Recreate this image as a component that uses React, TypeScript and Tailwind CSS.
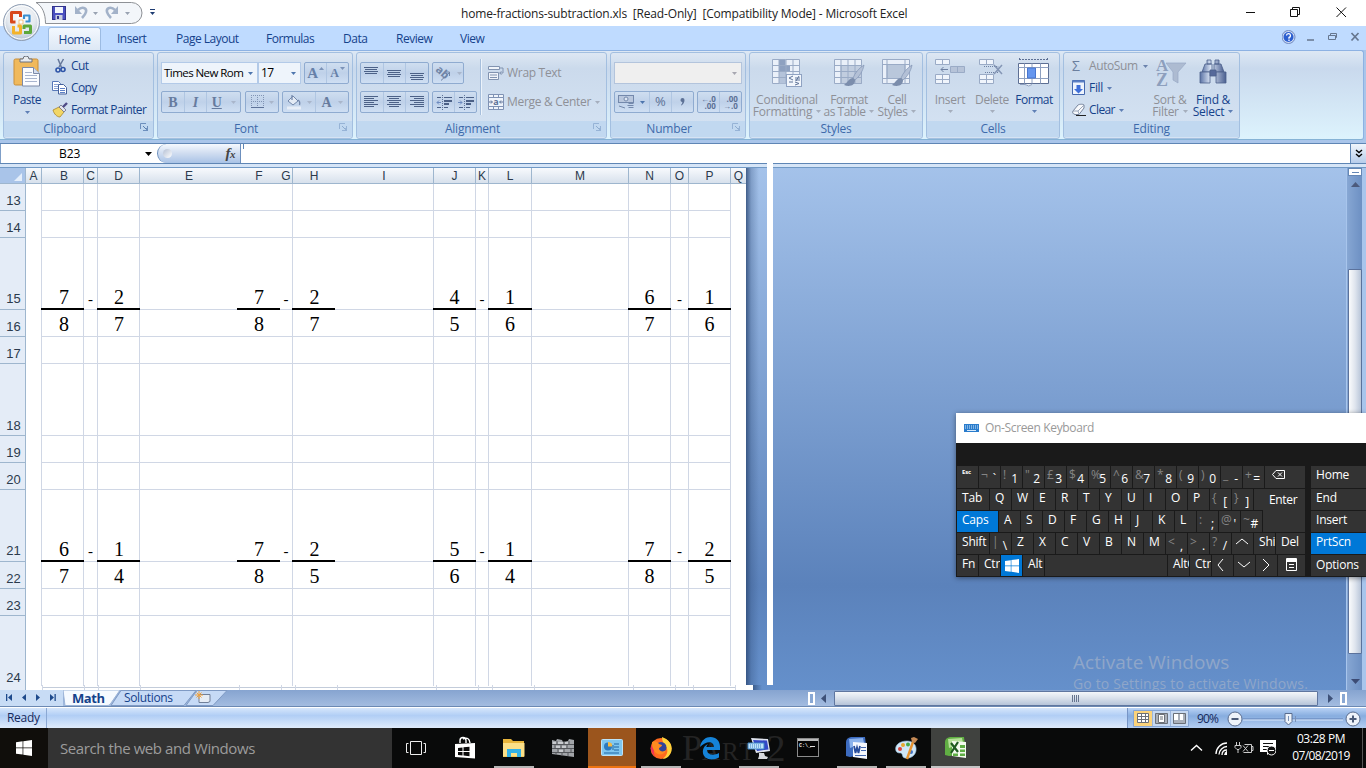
import React from "react";

type Kids = { children?: React.ReactNode; className?: string };

const UI = "font-['Open_Sans','Noto_Sans',sans-serif]";

/* ---------- small helpers ---------- */

function Arrow({ className = "text-[#7a8fb4]" }: { className?: string }) {
  return (
    <svg width="5" height="3" viewBox="0 0 5 3" className={`shrink-0 ${className}`}>
      <path d="M0 0h5L2.5 3z" fill="currentColor" />
    </svg>
  );
}

function Launcher({ dim = false }: { dim?: boolean }) {
  return (
    <svg width="9" height="9" viewBox="0 0 9 9" className={dim ? "opacity-50" : ""}>
      <path d="M.5 6V.5H6" fill="none" stroke="#6d8fbd" />
      <path d="M3 3l3 3" stroke="#5b7fae" />
      <path d="M8 3v5H3V7h3V5h1V3z" fill="#6d8fbd" />
    </svg>
  );
}

function Group({ title, width, launcher, children }: { title: string; width: string; launcher?: "on" | "dim"; children?: React.ReactNode }) {
  return (
    <section className={`flex shrink-0 flex-col overflow-hidden rounded-[3px] border border-[#a3bfe0] bg-gradient-to-b from-[#dde7f3] via-[#cbdaec] via-[18%] to-[#d5e3f3] ${width}`}>
      <div className="flex h-[68px]">{children}</div>
      <div className={`relative flex h-[16px] items-center justify-center bg-[#c1d8f0] text-[12px] tracking-[-0.2px] text-[#3e6aaa] ${launcher ? "pr-[18px]" : ""}`}>
        {title}
        {launcher && (
          <span className="absolute right-[4px] top-[2px]">
            <Launcher dim={launcher === "dim"} />
          </span>
        )}
      </div>
    </section>
  );
}

function Box({ className = "", children }: Kids) {
  return (
    <div className={`flex h-[22px] shrink-0 items-stretch divide-x divide-[#b0c6e2] rounded-[2px] border border-[#8fabd0] bg-gradient-to-b from-[#cfdef0] via-[#bfd1e9] to-[#cfdff3] ${className}`}>
      {children}
    </div>
  );
}

function Cell({ className = "", children }: Kids) {
  return <div className={`flex flex-1 items-center justify-center gap-[5px] ${className}`}>{children}</div>;
}

function Lines({ rows, top }: { rows: [number, number][]; top: number }) {
  return (
    <svg width="15" height="14" viewBox="0 0 15 14">
      {rows.map(([x, w], i) => (
        <rect key={i} x={x} y={top + i * 2} width={w} height="1" fill="#4c6187" />
      ))}
    </svg>
  );
}

/* ---------- title bar ---------- */

function OfficeButton() {
  return (
    <svg width="40" height="40" viewBox="0 0 40 40" className="absolute left-[2px] top-[2px]">
      <defs>
        <radialGradient id="orb" cx="50%" cy="35%" r="65%">
          <stop offset="0" stopColor="#fff" />
          <stop offset=".6" stopColor="#e4e9ef" />
          <stop offset="1" stopColor="#b4c2d3" />
        </radialGradient>
      </defs>
      <circle cx="19.5" cy="20.5" r="18" fill="url(#orb)" stroke="#8d9cb2" />
      <circle cx="19.5" cy="20.5" r="16.6" fill="none" stroke="#fff" />
      <g fill="none" strokeWidth="3" strokeLinejoin="round">
        <path d="M13.500 20H9.500v-9.500h9V15" stroke="#d8481c" />
        <path d="M22 17v-3.500h5.500v6h-4" stroke="#3b8fd0" strokeWidth="2.200" />
        <path d="M11.500 24v7h7v-7h-3" stroke="#f4b32a" />
        <path d="M22 27v-3h6.500v6.500H22" stroke="#5da83a" />
      </g>
      <rect x="17" y="18" width="4" height="4" fill="#fff" stroke="#e9a13b" strokeWidth=".6" />
    </svg>
  );
}

function TitleBar() {
  return (
    <header className="relative flex h-[26px] bg-white">
      <svg width="110" height="24" viewBox="0 0 110 24" className="ml-[34px] mt-[1px]">
        <path d="M2 1.500H97.500a10.500 10.500 0 0 1 0 21H11.500C11.500 12 8 5 2 1.500z" fill="#f3f6fa" stroke="#8e9196" />
        <g transform="translate(18 5)">
          <rect x=".5" y=".5" width="13" height="13" fill="#4a4fc0" stroke="#33348c" />
          <rect x="3" y="1" width="8" height="6" fill="#f2f5fc" />
          <rect x="3.500" y="9" width="7" height="5" fill="#c9cede" />
          <rect x="5" y="10" width="2" height="3" fill="#33348c" />
        </g>
        <g fill="none" stroke="#a3b2c9" strokeWidth="2.600">
          <path d="M44 9c4-4 9-2 8 2-.5 2-2 4-4 6" />
          <path d="M81 9c-4-4-9-2-8 2 .5 2 2 4 4 6" />
        </g>
        <path d="M41 5v8h7z" fill="#a3b2c9" />
        <path d="M84 5v8h-7z" fill="#a3b2c9" />
        <path d="M59 11h5l-2.500 3zM91 11h5l-2.500 3z" fill="#9aa3b2" />
      </svg>
      <svg width="7" height="8" viewBox="0 0 7 8" className="ml-[5px] mt-[9px]">
        <path d="M1 .5h5" stroke="#1e3c72" />
        <path d="M1 3h5L3.500 6z" fill="#1e3c72" />
      </svg>
      <div className="absolute left-[461px] top-[5px] whitespace-pre text-[12px] leading-[17px] tracking-[-0.175px] text-[#222]">
        {"home-fractions-subtraction.xls  [Read-Only]  [Compatibility Mode] - Microsoft Excel"}
      </div>
      <svg width="120" height="26" viewBox="0 0 120 26" className="ml-auto" fill="none" stroke="#111">
        <path d="M-1 12.500h10" />
        <path d="M44.500 9.500h7v7h-7zM46.500 9.500v-2h7v7h-2" />
        <path d="M90.500 7.500l9.500 9.500M100 7.500L90.500 17" />
      </svg>
    </header>
  );
}

function TabStrip() {
  const tabs: [string, string][] = [
    ["Insert", "w-[59px]"],
    ["Page Layout", "w-[90px]"],
    ["Formulas", "w-[77px]"],
    ["Data", "w-[53px]"],
    ["Review", "w-[64px]"],
    ["View", "w-[40px]"],
  ];
  return (
    <nav className="flex h-[24px] items-start bg-[#bfdbff] text-[12px] leading-[26px] tracking-[-0.5px] text-[#15428b]">
      <div className="ml-[48px] mr-[16px] mt-[1px] h-[23px] w-[53px] rounded-t-[3px] border border-b-0 border-[#9cbbe2] bg-gradient-to-b from-[#f3f8fe] to-[#dde8f5] text-center leading-[24px]">Home</div>
      {tabs.map(([t, w]) => (
        <div key={t} className={`shrink-0 whitespace-nowrap ${w}`}>
          {t}
        </div>
      ))}
      <svg width="84" height="22" viewBox="0 0 84 22" className="ml-auto">
        <circle cx="6.500" cy="11" r="6.500" fill="#cfdcf3" stroke="#7088c0" />
        <circle cx="6.500" cy="11" r="5" fill="#2c5fd0" />
        <path d="M4.500 9.500a2 2 0 1 1 2.500 2v1.200M7 13.500v1.500" fill="none" stroke="#fff" strokeWidth="1.300" />
        <path d="M25 14h7" stroke="#66768e" strokeWidth="1.500" />
        <path d="M46.500 9.500h7v4h-7zM48.500 9V7.500h6v4h-1" fill="none" stroke="#66768e" />
        <path d="M69.500 7l7 7.500M76.500 7l-7 7.500" stroke="#66768e" strokeWidth="1.700" />
      </svg>
    </nav>
  );
}

/* ---------- ribbon ---------- */

function PasteIcon() {
  return (
    <svg width="28" height="32" viewBox="0 0 28 32">
      <rect x="1" y="3" width="24" height="26" rx="1.500" fill="#f0b95c" stroke="#c98f3a" />
      <path d="M7 6V3h3a3 3 0 0 1 6 0h3v3z" fill="#e8ebef" stroke="#6a717c" />
      <path d="M9.500 11.500h11l6 6V30h-17z" fill="#fbfcff" stroke="#7c8aa8" />
      <path d="M20.500 11.500v6h6" fill="#d5def0" stroke="#7c8aa8" />
      <path d="M12 16.500h7M12 19.500h12M12 22.500h12M12 25.500h12" stroke="#a9b5cf" />
    </svg>
  );
}

function Clipboard() {
  return (
    <Group title="Clipboard" width="w-[151px]" launcher="on">
      <div className="ml-[9px] flex w-[28px] flex-col items-center pt-[3px] text-[12px] leading-[16px] tracking-[-0.5px] text-[#15428b]">
        <PasteIcon />
        <span className="mt-[4px]">Paste</span>
        <Arrow className="mt-[3px] text-[#5f7fb5]" />
      </div>
      <div className="ml-[11px] flex flex-col pt-[2px] text-[12px] leading-[22px] tracking-[-0.6px] text-[#15428b]">
        <div className="flex items-center gap-[3px]">
          <svg width="16" height="16" viewBox="0 0 16 16">
            <path d="M6 1l3.500 8.500M11.500 1L7 9" stroke="#66789a" strokeWidth="1.500" />
            <circle cx="6" cy="12" r="2" fill="none" stroke="#2f55a8" strokeWidth="1.600" />
            <circle cx="11" cy="11.500" r="2" fill="none" stroke="#2f55a8" strokeWidth="1.600" />
          </svg>
          Cut
        </div>
        <div className="flex items-center gap-[3px]">
          <svg width="16" height="16" viewBox="0 0 16 16">
            <path d="M.5 1.500h6l2 2v7h-8z" fill="#fff" stroke="#5878b8" />
            <path d="M2 4.500h4M2 6.500h4M2 8.500h4" stroke="#8fa6d4" />
            <path d="M6.500 4.500h5l3 3v6.500h-8z" fill="#fff" stroke="#44619c" />
            <path d="M8 8.500h5M8 10.500h5M8 12.500h5" stroke="#5c80c6" />
          </svg>
          Copy
        </div>
        <div className="flex items-center gap-[3px] whitespace-nowrap">
          <svg width="16" height="16" viewBox="0 0 16 16">
            <path d="M1 8l6-3 5 5-4 5c-3 0-6-3-7-7z" fill="#f2d665" stroke="#a9872b" strokeWidth=".8" />
            <path d="M7 5l2-2 5 5-2 2z" fill="#e3e3ea" stroke="#6b6f86" strokeWidth=".8" />
            <path d="M11 5l4-4" stroke="#4e4a86" strokeWidth="2.400" />
          </svg>
          Format Painter
        </div>
      </div>
    </Group>
  );
}

function FontGroup() {
  return (
    <Group title="Font" width="w-[196px]" launcher="dim">
      <div className="ml-[3px] flex flex-col">
        <div className="mt-[9px] flex text-[12px] tracking-[-0.2px] text-black">
          <div className="flex h-[22px] w-[97px] items-center justify-between border border-[#b3cae8] bg-[#eef4fb] pl-[2px] pr-[4px]">
            <span className="whitespace-nowrap text-[11.5px] tracking-[-0.55px]">Times New Rom</span>
            <Arrow className="text-[#4d75ad]" />
          </div>
          <div className="flex h-[22px] w-[43px] items-center justify-between border border-[#b3cae8] bg-[#eef4fb] pl-[2px] pr-[4px] tracking-[-0.7px]">
            17
            <Arrow className="text-[#4d75ad]" />
          </div>
          <Box className="ml-[3px] w-[45px] font-['Liberation_Serif',serif] font-bold text-[#6680a8]">
            <Cell className="gap-px text-[15px]">
              A<svg width="5" height="12" viewBox="0 0 5 12"><path d="M0 3h5L2.500 0z" fill="#7c93b8" /></svg>
            </Cell>
            <Cell className="gap-px text-[12px]">
              A<svg width="5" height="12" viewBox="0 0 5 12"><path d="M0 0h5L2.500 3z" fill="#7c93b8" /></svg>
            </Cell>
          </Box>
        </div>
        <div className="mt-[7px] flex font-['Liberation_Serif',serif] text-[14px] font-bold text-[#667b9e]">
          <Box className="w-[80px]">
            <Cell>B</Cell>
            <Cell className="italic">I</Cell>
            <Cell className="flex-[1.5] gap-[9px]">
              <span className="underline">U</span>
              <Arrow className="text-[#a9b6cb]" />
            </Cell>
          </Box>
          <Box className="ml-[4px] w-[34px]">
            <Cell>
              <svg width="13" height="14" viewBox="0 0 13 14" fill="none" stroke="#8194b4">
                <path d="M.5 0v12M6.500 0v12M12.500 0v12M0 .5h13M0 6.500h13" strokeDasharray="1 1" />
                <path d="M0 12.500h13" stroke="#5d7299" />
              </svg>
              <Arrow className="text-[#a9b6cb]" />
            </Cell>
          </Box>
          <Box className="ml-[3px] w-[67px]">
            <Cell>
              <svg width="16" height="16" viewBox="0 0 16 16">
                <path d="M2 7l5-5 5 5-5 4z" fill="#e4ebf5" stroke="#7388ab" />
                <path d="M6 1v5M12 6c2 1 2 3 1.500 5" stroke="#7388ab" fill="none" strokeWidth="1.300" />
                <rect x="1" y="12.500" width="14" height="3" fill="#e7eef8" />
              </svg>
              <Arrow className="text-[#a9b6cb]" />
            </Cell>
            <Cell className="gap-[6px]">
              A<Arrow className="text-[#a9b6cb]" />
            </Cell>
          </Box>
        </div>
      </div>
    </Group>
  );
}

function Alignment() {
  return (
    <Group title="Alignment" width="w-[251px]" launcher="dim">
      <div className="ml-[3px] flex w-[117px] flex-col">
        <div className="mt-[9px] flex gap-[3px]">
          <Box className="w-[69px]">
            <Cell><Lines top={1} rows={[[0, 14], [1, 12], [0, 14], [1, 12]]} /></Cell>
            <Cell><Lines top={4} rows={[[0, 14], [1, 12], [0, 14], [1, 12]]} /></Cell>
            <Cell><Lines top={7} rows={[[0, 14], [1, 12], [0, 14], [1, 12]]} /></Cell>
          </Box>
          <Box className="w-[32px]">
            <Cell className="gap-[2px] text-[11px] text-[#667b9e]">
              <svg width="17" height="17" viewBox="0 0 17 17">
                <text x="1" y="9" transform="rotate(42 5 6)" fontSize="11" fontFamily="Open Sans" fontWeight="bold" fill="#7084a6">ab</text>
                <path d="M6 15.500l8.500-8M14.500 7h-4M14.500 7v4" stroke="#7084a6" fill="none" />
              </svg>
              <Arrow className="text-[#a9b6cb]" />
            </Cell>
          </Box>
        </div>
        <div className="mt-[7px] flex gap-[3px]">
          <Box className="w-[69px]">
            <Cell><Lines top={1} rows={[[0, 14], [0, 10], [0, 14], [0, 10], [0, 14], [0, 10]]} /></Cell>
            <Cell><Lines top={1} rows={[[0, 14], [2, 10], [0, 14], [2, 10], [0, 14], [2, 10]]} /></Cell>
            <Cell><Lines top={1} rows={[[0, 14], [4, 10], [0, 14], [4, 10], [0, 14], [4, 10]]} /></Cell>
          </Box>
          <Box className="w-[45px]">
            {[0, 1].map((i) => (
              <Cell key={i}>
                <svg width="16" height="15" viewBox="0 0 16 15">
                  <path d="M6.500 0v15" stroke="#5f7499" strokeDasharray="1 1" />
                  <path d="M1 2.500h4M8 2.500h8M1 12.500h4M8 12.500h4" stroke="#4c6187" />
                  <path d="M8 6h8M8 9h5" stroke="#4c6187" strokeWidth="2" />
                  <path d={i === 0 ? "M5 7.500H1M3 5.500l-2 2 2 2" : "M0 7.500h4M2 5.500l2 2-2 2"} stroke="#6d8bc0" fill="none" />
                </svg>
              </Cell>
            ))}
          </Box>
        </div>
      </div>
      <div className="ml-[3px] mt-[6px] h-[56px] w-[2px] border-l border-[#a7bfdc] bg-[#ecf3fb]" />
      <div className="ml-[6px] flex flex-col text-[12px] tracking-[-0.3px] text-[#8e9097]">
        <div className="mt-[9px] flex h-[22px] items-center gap-[3px]">
          <svg width="16" height="16" viewBox="0 0 16 16" stroke="#8193b0">
            <path d="M.5 1.500h11v3H.5zM.5 7.500h10v7H.5z" fill="#f0f4fa" />
            <path d="M2 10h7M2 12.500h7M12 3h3v5h-3M13.500 6.500l-2 1.500 2 1.500" fill="none" />
          </svg>
          Wrap Text
        </div>
        <div className="mt-[7px] flex h-[22px] items-center gap-[3px] whitespace-nowrap">
          <svg width="16" height="16" viewBox="0 0 16 16" stroke="#7f92b4">
            <path d="M.5.500h15v3H.5zM.5 12.500h15v3H.5zM.5 3.500h15v9H.5z" fill="#eff4fb" />
            <path d="M5.500 .5v3M10.500 .5v3M5.500 12.500v3M10.500 12.500v3" />
            <path d="M1 8h3M15 8h-3M3 6.500L4.500 8 3 9.500M13 6.500L11.500 8 13 9.500" fill="none" stroke="#5c7196" />
            <text x="5.200" y="11" fontSize="9" fontWeight="bold" fontFamily="Open Sans" fill="#5c7196" stroke="none">a</text>
          </svg>
          Merge &amp; Center
          <Arrow className="ml-px text-[#a5aebd]" />
        </div>
      </div>
    </Group>
  );
}

function NumberGroup() {
  return (
    <Group title="Number" width="w-[136px]" launcher="dim">
      <div className="ml-[3px] flex flex-col">
        <div className="mt-[9px] flex h-[22px] w-[128px] items-center justify-end border border-[#b3c4dc] bg-[#efefef] pr-[4px]">
          <Arrow className="text-[#a7a7b0]" />
        </div>
        <div className="mt-[7px] flex gap-[3px] text-[#5c7196]">
          <Box className="w-[80px]">
            <Cell className="flex-[1.6]">
              <svg width="17" height="16" viewBox="0 0 17 16" stroke="#7489ac">
                <rect x=".5" y="1.500" width="15" height="7" fill="#b9c7dd" />
                <circle cx="8" cy="5" r="2" fill="#dfe7f2" />
                <path d="M10.500 9.500h5M9.500 11.500h6M10.500 13.500h5M1 12l6 2" fill="none" />
              </svg>
              <Arrow className="text-[#4d75ad]" />
            </Cell>
            <Cell className="text-[13px]">%</Cell>
            <Cell>
              <svg width="5" height="8" viewBox="0 0 5 8"><path d="M.5 2a2 2 0 1 1 4 0c0 2-1 4-3 5.500L1 7c1-1 1.300-2 1.300-3C1.300 4 .5 3 .5 2z" fill="#5c7196" /></svg>
            </Cell>
          </Box>
          <Box className="w-[45px] text-[8px] font-bold leading-[7px]">
            <Cell><span className="whitespace-pre text-right">{"←.0\n.00"}</span></Cell>
            <Cell><span className="whitespace-pre text-right">{".00\n→.0"}</span></Cell>
          </Box>
        </div>
      </div>
    </Group>
  );
}

function TableGlyph({ kind }: { kind: "cond" | "table" | "cell" }) {
  return (
    <svg width="32" height="30" viewBox="0 0 32 30">
      <g stroke="#9aabc6" fill="#eaf0f9">
        <path d="M1.500 1.500h27v24h-27z" />
        {kind === "table" && <path d="M8 7.500h20.500v18H8z" fill="#c1cddf" />}
        {kind === "cell" && <path d="M6 6.500h18v14H6z" fill="#b9c7db" />}
        {kind === "cond" && (
          <>
            <path d="M8 1.500h7v24H8z" fill="#b4c3da" stroke="none" />
            <path d="M8 1.500h6v6H8zM8 7.500h11v6H8z" fill="#8ea1c0" stroke="none" />
          </>
        )}
        {kind === "cell" ? (
          <path d="M6 1.500v24M24 1.500v24M1.500 6.500h27M1.500 20.500h27" fill="none" />
        ) : (
          <path d="M8 1.500v24M15 1.500v24M22 1.500v24M1.500 7.500h27M1.500 13.500h27M1.500 19.500h27" fill="none" />
        )}
      </g>
      {kind === "cond" ? (
        <g>
          <rect x="15.500" y="16.500" width="15" height="12" fill="#f2f6fc" stroke="#8fa2c2" />
          <path d="M22 18l-4 2 4 2M18 24h4M24 20h5M24 22h5M28 18l-3 5M24 24l4 1.500-4 1.500" fill="none" stroke="#5f7499" />
        </g>
      ) : (
        <g>
          <path d="M31 7c-5 3-9 8-11 13l2 2c4-3 8-9 9-15z" fill="#b3c0d6" stroke="#8194b4" strokeWidth=".7" />
          <path d="M20 20c-4 0-5 4-9 7 5 2 11 1 11-5z" fill="#7b8dac" />
        </g>
      )}
    </svg>
  );
}

function Big({ icon, lines, dim = true, className = "", arrowInline = false }: { icon: React.ReactNode; lines: string[]; dim?: boolean; className?: string; arrowInline?: boolean }) {
  const arrow = dim ? "text-[#a5aebd]" : "text-[#5f7fb5]";
  return (
    <div className={`flex shrink-0 flex-col items-center whitespace-nowrap pt-[5px] text-[12px] leading-[13px] ${dim ? "text-[#8e9097]" : "text-[#15428b]"} ${className}`}>
      <div className="flex h-[35px]">{icon}</div>
      <span>{lines[0]}</span>
      {arrowInline ? (
        <span className="-mt-px flex items-center gap-[4px]">
          {lines[1]}
          <Arrow className={arrow} />
        </span>
      ) : (
        <Arrow className={`mt-[4px] ${arrow}`} />
      )}
    </div>
  );
}

function Styles() {
  return (
    <Group title="Styles" width="w-[174px]">
      <Big className="ml-[4px] w-[66px] tracking-[-0.2px]" icon={<TableGlyph kind="cond" />} lines={["Conditional", "Formatting"]} arrowInline />
      <Big className="ml-[4px] w-[50px] tracking-[-0.5px]" icon={<TableGlyph kind="table" />} lines={["Format", "as Table"]} arrowInline />
      <Big className="ml-[4px] w-[38px] tracking-[-0.4px]" icon={<TableGlyph kind="cell" />} lines={["Cell", "Styles"]} arrowInline />
    </Group>
  );
}

function CellsGroup() {
  return (
    <Group title="Cells" width="w-[134px]">
      <Big
        className="ml-[7px] w-[32px] tracking-[-0.3px]"
        lines={["Insert"]}
        icon={
          <svg width="32" height="30" viewBox="0 0 32 30" stroke="#9aabc6" fill="#f0f5fc">
            <path d="M1.500 1.500h14v5h-14zM8.500 1.500v5M1.500 16.500h14v9h-14zM8.500 16.500v9M1.500 21.500h14" />
            <path d="M16.500 8.500h14v6h-14zM23.500 8.500v6" fill="#b6c3d8" />
            <path d="M14 11.500H7M9.500 9L7 11.500 9.500 14" stroke="#6d80a2" fill="none" />
          </svg>
        }
      />
      <Big
        className="ml-[9px] w-[34px] tracking-[-0.4px]"
        lines={["Delete"]}
        icon={
          <svg width="30" height="30" viewBox="0 0 30 30" stroke="#9aabc6" fill="#f0f5fc">
            <path d="M2.500 1.500h14v5h-14zM9.500 1.500v5M2.500 16.500h14v9h-14zM9.500 16.500v9M2.500 21.500h14" />
            <path d="M7 8.500h14v6H7" fill="none" strokeDasharray="1 1" stroke="#6d80a2" />
            <path d="M17 7l8 9M25 7l-8 9" stroke="#8496b5" strokeWidth="1.500" />
          </svg>
        }
      />
      <Big
        className="ml-[7px] w-[36px] tracking-[-0.5px]"
        dim={false}
        lines={["Format"]}
        icon={
          <svg width="32" height="30" viewBox="0 0 32 30" stroke="#5d6f93">
            <path d="M1 1.500h29M1.500 0v3M29.500 0v3" strokeDasharray="2 1" />
            <path d="M.5 5.500h30v20H.5z" fill="#fff" />
            <path d="M.5 9.500h30M.5 20.500h30M6.500 5.500v20M22.500 5.500v20M14 5.500v4M14 20.500v5" stroke="#8ea0c0" fill="none" />
            <path d="M9.500 10h8v10h-8z" fill="#6596ee" stroke="#4876cf" />
            <path d="M2 26.500h5q4 3 7 0" stroke="#8ea0c0" fill="#fff" />
          </svg>
        }
      />
    </Group>
  );
}

function Editing() {
  return (
    <Group title="Editing" width="w-[177px]">
      <div className="ml-[8px] flex w-[76px] flex-col pt-[2px] text-[12px] leading-[22px] tracking-[-0.05px] text-[#15428b]">
        <div className="flex items-center">
          <span className="w-[17px] text-[14px] text-[#6b7f9f]">Σ</span>
          <span className="tracking-[-0.4px] text-[#8e9097]">AutoSum</span>
          <Arrow className="ml-[5px] text-[#6a82ac]" />
        </div>
        <div className="flex items-center tracking-[-0.3px]">
          <svg width="13" height="16" viewBox="0 0 13 16" className="mr-[4px]">
            <path d="M.5.500h12v14H.5z" fill="#eef4fd" stroke="#4468ae" />
            <path d="M.5.500h12v2H.5z" fill="#5a7fc4" />
            <path d="M4.500 5h4v4H11l-4.500 4.500L2 9h2.500z" fill="#3f6fd8" />
          </svg>
          Fill
          <Arrow className="ml-[4px] text-[#5f7fb5]" />
        </div>
        <div className="flex items-center tracking-[-0.6px]">
          <svg width="14" height="14" viewBox="0 0 14 14" className="mr-[3px]">
            <path d="M1 8l5-6c1-1 6-1 6 0v3l-5 6.500H3C1 11 0 9.500 1 8z" fill="#f7f9fc" stroke="#76839b" />
            <path d="M1 8h5l6-6M6 8l1 3" fill="none" stroke="#9aa6ba" />
            <path d="M4 12.500h10" stroke="#222" />
          </svg>
          Clear
          <Arrow className="ml-[4px] text-[#5f7fb5]" />
        </div>
      </div>
      <Big
        className="ml-[5px] w-[34px] tracking-[-0.3px]"
        lines={["Sort &", "Filter"]}
        arrowInline
        icon={
          <svg width="32" height="32" viewBox="0 0 32 32" className="ml-[2px]">
            <path d="M11 5h20l-8 9v11l-5-3v-8z" fill="#adbbd1" stroke="#98a9c5" strokeWidth=".7" />
            <text x="1" y="13" fontSize="17" fontFamily="Liberation Serif" fontWeight="bold" fill="#8d9fbd">A</text>
            <text x="1" y="28" fontSize="18" fontFamily="Liberation Serif" fontWeight="bold" fill="#8d9fbd">Z</text>
          </svg>
        }
      />
      <Big
        className="ml-[7px] w-[38px] tracking-[-0.3px]"
        dim={false}
        lines={["Find &", "Select"]}
        arrowInline
        icon={
          <svg width="30" height="30" viewBox="0 0 30 30" stroke="#4b5f8b" strokeWidth=".8">
            <defs>
              <linearGradient id="bino">
                <stop offset="0" stopColor="#5b73a5" />
                <stop offset=".4" stopColor="#dce6f6" />
                <stop offset="1" stopColor="#4a5f90" />
              </linearGradient>
            </defs>
            <path d="M9 2h4v4H9zM17 2h4v4h-4zM7 6h7v8H4zM16 6h7l3 8H16z" fill="url(#bino)" />
            <path d="M2 14h10v11H2zM18 14h10v11H18z" fill="url(#bino)" />
            <path d="M12 12h6v6h-6z" fill="#56699a" />
          </svg>
        }
      />
    </Group>
  );
}

function Ribbon() {
  return (
    <div className="flex h-[93px] flex-col bg-[#a9c5ea]">
      <div className="mr-[2px] flex h-[90px] gap-[3px] rounded-r-[3px] border border-l-0 border-[#8db2e3] border-b-[#86b3d6] bg-gradient-to-b from-[#dde8f4] via-[#c9d9ed] via-[20%] to-[#ddf3fd] pl-[3px] pt-[1px] text-[12px]">
        <Clipboard />
        <FontGroup />
        <Alignment />
        <NumberGroup />
        <Styles />
        <CellsGroup />
        <Editing />
      </div>
    </div>
  );
}

function FormulaBar() {
  return (
    <div className="flex h-[26px] flex-col bg-[#d6e5f7]">
      <div className="flex h-[21px] border-y border-[#5f86b5] bg-white">
        <div className="flex w-[157px] items-center border-l border-[#7f9fc8] text-[12px] tracking-[-0.1px] text-black">
          <span className="ml-[58px]">B23</span>
          <svg width="7" height="4" viewBox="0 0 7 4" className="ml-auto mr-[5px]"><path d="M0 0h7L3.500 4z" fill="#000" /></svg>
        </div>
        <div className="flex w-[84px] items-center justify-between rounded-l-full border-r border-l border-[#6c8fbd] bg-gradient-to-b from-[#f5f9fe] via-[#cfdcf0] to-[#a9c3e6] pl-[5px] pr-[5px]">
          <span className="h-[9px] w-[9px] rounded-full bg-gradient-to-br from-[#b5c0d4] to-white" />
          <span className="font-['Liberation_Serif',serif] text-[15px] font-bold italic leading-none tracking-[-0.5px] text-[#444]">
            f<span className="text-[11px]">x</span>
          </span>
        </div>
        <div className="ml-[2px] h-[5px] w-px bg-[#5f86b5]" />
        <div className="ml-auto flex w-[16px] items-center justify-center border-l border-[#5f86b5] bg-gradient-to-b from-[#f0f5fc] to-[#b7cdeb]">
          <svg width="8" height="9" viewBox="0 0 8 9" fill="none" stroke="#000" strokeWidth="1.400"><path d="M1 1l3 2.500L7 1M1 5l3 2.500L7 5" /></svg>
        </div>
      </div>
      <div className="mt-[3px] h-px bg-[#7199c5]" />
    </div>
  );
}

/* ---------- worksheet ---------- */

const COLS = "grid grid-cols-[16px_42px_14px_42px_98px_42px_13px_42px_99px_42px_13px_43px_97px_42px_18px_42px_15px]";
const LETTERS = ["A", "B", "C", "D", "E", "F", "G", "H", "I", "J", "K", "L", "M", "N", "O", "P", "Q"];
const NO_LINE = [4, 5, 7, 16];
const BAR_COLS = [1, 3, 5, 7, 9, 11, 13, 15];

type RowSpec = { n: number; h: string; vals?: string[]; bar?: boolean; last?: boolean };

const top = (v: string[]) => {
  const out: string[] = Array(17).fill("");
  BAR_COLS.forEach((c, i) => (out[c] = v[i]));
  return out;
};
const withMinus = (v: string[]) => {
  const out = top(v);
  [2, 6, 10, 14].forEach((c) => (out[c] = "-"));
  return out;
};

const ROWS: RowSpec[] = [
  { n: 13, h: "h-[27px]" },
  { n: 14, h: "h-[27px]" },
  { n: 15, h: "h-[72px]", bar: true, vals: withMinus(["7", "2", "7", "2", "4", "1", "6", "1"]) },
  { n: 16, h: "h-[27px]", vals: top(["8", "7", "8", "7", "5", "6", "7", "6"]) },
  { n: 17, h: "h-[27px]" },
  { n: 18, h: "h-[72px]" },
  { n: 19, h: "h-[27px]" },
  { n: 20, h: "h-[27px]" },
  { n: 21, h: "h-[72px]", bar: true, vals: withMinus(["6", "1", "7", "2", "5", "1", "7", "2"]) },
  { n: 22, h: "h-[27px]", vals: top(["7", "4", "8", "5", "6", "4", "8", "5"]) },
  { n: 23, h: "h-[27px]" },
  { n: 24, h: "h-[70px]", last: true },
];

function Sheet() {
  return (
    <div className="flex w-[746px] shrink-0 flex-col bg-white">
      <div className="flex h-[16px] font-['Liberation_Sans',sans-serif] text-[12px] leading-[16px] text-[#2b3a4c]">
        <div className="flex w-[26px] items-end justify-end border-b border-r border-[#9eb6ce] bg-[#a9c4e9] pb-[2px] pr-[3px]">
          <svg width="8" height="8" viewBox="0 0 8 8"><path d="M8 0v8H0z" fill="#e4eefb" /></svg>
        </div>
        <div className={`${COLS} flex-1 bg-gradient-to-b from-[#f8fafd] to-[#d5dfeb]`}>
          {LETTERS.map((l, i) => (
            <div key={l} className={`overflow-hidden border-b border-[#9eb6ce] text-center ${NO_LINE.includes(i) ? "" : "border-r"} ${i === 1 ? "pl-[3px]" : ""}`}>
              {l}
            </div>
          ))}
        </div>
      </div>
      {ROWS.map((r) => (
        <div key={r.n} className={`flex shrink-0 ${r.h}`}>
          <div className={`flex w-[26px] items-end justify-center border-r border-[#9eb6ce] bg-[#e4ecf7] pl-[2px] font-['Liberation_Sans',sans-serif] text-[13px] text-[#2b3a4c] ${r.last ? "leading-[16px]" : r.bar ? "border-b leading-[20px]" : "border-b leading-[18px]"}`}>
            {r.n}
          </div>
          <div className={`${COLS} flex-1 font-['Liberation_Serif',serif] text-[20px] leading-[24px] text-black`}>
            {LETTERS.map((l, i) => {
              const bottom = i > 0 && i < 16 && !r.last;
              const v = r.vals?.[i];
              return (
                <div key={l} className={`relative flex items-end justify-center border-[#d0d7e5] ${bottom ? "border-b" : ""} ${NO_LINE.includes(i) ? "" : "border-r"} ${i === 1 ? "pl-[3px]" : i === 3 || i === 7 ? "pl-px" : ""}`}>
                  {v === "-" ? <span className="text-[15px] leading-[20px]">-</span> : v}
                  {r.bar && BAR_COLS.includes(i) && <span className={`absolute -bottom-px -left-px h-[2px] bg-black ${NO_LINE.includes(i) ? "right-0" : "-right-px"}`} />}
                </div>
              );
            })}
          </div>
        </div>
      ))}
    </div>
  );
}

/* Partially repainted strip under the last row */
function Strip() {
  const ticks = ["w-[17px]", "w-[42px]", "w-[14px]", "w-[42px]", "w-[99px]", "w-[42px]", "w-[14px]", "w-[42px]", "w-[99px]", "w-[42px]", "w-[14px]", "w-[42px]", "w-[99px]", "w-[42px]", "w-[18px]", "w-[42px]"];
  return (
    <div className="flex h-[5px] w-full">
      <div className="w-[26px] border-r border-[#9eb6ce] bg-[#e4ecf7]" />
      <div className="flex w-[727px] bg-white">
        {ticks.map((w, i) => (
          <div key={i} className={`h-[5px] shrink-0 border-r border-[#d0d7e5] ${w}`}>
            {i > 0 && <div className="mt-[2px] h-px bg-[#c3ccda]" />}
          </div>
        ))}
      </div>
      <div className="w-[9px] bg-gradient-to-r from-[#33527f]/80 to-transparent" />
    </div>
  );
}

function VScroll() {
  return (
    <div className="ml-auto flex w-[20px] shrink-0 bg-[#a8c5ec]">
      <div className="ml-px flex w-[15px] flex-col items-center border-l border-[#86a7d4] bg-gradient-to-r from-[#85a5d2] to-[#6d90c3]">
        <div className="flex h-[8px] w-full shrink-0 items-center justify-center border border-[#6587b5] bg-white"><div className="h-px w-[7px] bg-[#6587b5]" /></div>
        <svg width="9" height="5" viewBox="0 0 9 5" className="mt-[6px] shrink-0"><path d="M0 5h9L4.500 0z" fill="#4c5a7c" /></svg>
        <div className="mt-[82px] h-[385px] w-full shrink-0 rounded-[1px] border border-[#5b729c] bg-gradient-to-r from-[#fafbfc] via-[#dfe5ee] to-[#b9c6d9]" />
        <svg width="9" height="5" viewBox="0 0 9 5" className="mt-[25px] shrink-0"><path d="M0 0h9L4.500 5z" fill="#3c4b74" /></svg>
      </div>
    </div>
  );
}

function Workspace() {
  return (
    <main className="relative flex h-[522px] flex-col overflow-hidden bg-gradient-to-b from-[#a4c2ea] via-[#5b82bb] via-[80%] to-[#6590cb]">
      <div className="flex h-[522px]">
        <div className="flex min-w-0 flex-1 flex-col">
          <div className="flex h-[517px]">
            <Sheet />
            <div className="w-[13px] bg-gradient-to-r from-[#2f4c79]/85 via-[#2f4c79]/30 via-[40%] to-transparent" />
            <div className="ml-[8px] w-[6px] bg-white" />
          </div>
          <Strip />
        </div>
        <VScroll />
      </div>
    </main>
  );
}

/* ---------- bottom bars ---------- */

function SheetTabs() {
  return (
    <div className="flex h-[17px] shrink-0 border-b border-[#6c89b3] bg-gradient-to-b from-[#86a4d0] to-[#a3bce0] text-[12px] leading-[16px] text-[#15428b]">
      <div className="flex w-[63px] items-center bg-[#c8dcf5]">
        <svg width="62" height="10" viewBox="0 0 62 10" fill="#1e4a8c">
          <path d="M6 1h1.300v7H6zM12 1v7L8 4.500zM26 1v7l-4-3.500zM36 1v7l4-3.500zM50 1v7l4-3.500zM54.500 1h1.300v7h-1.300z" />
        </svg>
      </div>
      <div className="relative flex h-[16px] w-[165px] items-center">
        <svg width="165" height="16" viewBox="0 0 165 16" className="absolute left-0 top-0" stroke="#7f9ac4">
          <path d="M123 15.500L134 .5h30L150 15.500z" fill="#c6daf6" />
          <path d="M48 15.500L58 .5h75L121 15.500z" fill="#c6daf6" />
          <path d="M0 0h57L47 14.500Q46 15.500 44 15.500H2z" fill="#f6faff" stroke="#9db5d8" />
          <path d="M136 4.500h11v7l-2 1h-9z" fill="#e6ecf5" stroke="#707f98" />
          <path d="M136 1v8M132 5h8M133.500 2.500l5 5M138.500 2.500l-5 5" stroke="#f0a13c" />
        </svg>
        <span className="relative ml-[9px] w-[52px] text-[13px] font-bold tracking-[-0.45px]">Math</span>
        <span className="relative tracking-[-0.35px]">Solutions</span>
      </div>
      <div className="ml-auto mr-[19px] flex w-[539px] items-center">
        <div className="h-[13px] w-[7px] border-2 border-white bg-[#89a8d4]" />
        <svg width="5" height="9" viewBox="0 0 5 9" className="ml-[6px]"><path d="M5 0v9L0 4.500z" fill="#3e5178" /></svg>
        <div className="ml-[8px] flex h-[15px] w-[484px] items-center justify-center rounded-[1px] border border-[#5f769f] bg-gradient-to-b from-[#f4f7fa] via-[#d7dfea] to-[#b6c4d9]">
          <svg width="8" height="7" viewBox="0 0 8 7" stroke="#66758f"><path d="M.5 0v7M2.500 0v7M4.500 0v7M6.500 0v7" /></svg>
        </div>
        <svg width="5" height="9" viewBox="0 0 5 9" className="ml-[10px]"><path d="M0 0v9L5 4.500z" fill="#3e5178" /></svg>
        <div className="ml-auto h-[13px] w-[7px] border-2 border-white bg-[#89a8d4]" />
      </div>
    </div>
  );
}

function StatusBar() {
  return (
    <div className="flex h-[21px] shrink-0 items-stretch border-t border-white bg-gradient-to-b from-[#d6e6fb] via-[#b1cef5] via-[38%] to-[#dfebfb] text-[12px] leading-[19px] tracking-[-0.3px] text-[#15295c]">
      <div className="w-[47px] border-r border-[#8ba8d3] pl-[7px]">Ready</div>
      <div className="ml-auto flex w-[239px] items-center border-l border-[#7795c6] bg-gradient-to-b from-[#b9d2f5] via-[#87addf] via-[40%] to-[#b4cef2] pl-[5px]">
        <svg width="56" height="17" viewBox="0 0 56 17">
          <path d="M.5.500h55v16H.5z" fill="#c7d9f1" stroke="#86a5d3" />
          <path d="M1 1h18v15H1z" fill="#fbd37a" />
          <path d="M19.500 1v15M37.500 1v15" stroke="#9cb6dc" />
          <g fill="#fff" stroke="#6b7078">
            <path d="M4.500 3.500h11v9h-11zM4.500 6.500h11M4.500 9.500h11M8.500 3.500v9M12.500 3.500v9" />
            <path d="M22.500 3.500h12v10h-12z" fill="#aab0ba" />
            <path d="M25.500 4.500h6v8h-6zM27 7h3M27 9h3" />
            <path d="M40.500 3.500h12v10h-12z" fill="#aab0ba" />
            <path d="M41 4h4v6h-4zM47 4h3v6h-3z" stroke="none" />
          </g>
        </svg>
        <span className="ml-[8px] w-[30px] text-[12px] tracking-[-0.9px]">90%</span>
        <svg width="134" height="19" viewBox="0 0 134 19" fill="none">
          <path d="M16 10h100" stroke="#5d7db3" />
          <path d="M16 11h100" stroke="#d9e7fb" />
          <g stroke="#596c8f">
            <circle cx="8" cy="10" r="7" fill="#eef3fa" />
            <circle cx="126" cy="10" r="7" fill="#eef3fa" />
            <path d="M4.500 10h7M122.500 10h7M126 6.500v7" strokeWidth="2" stroke="#4b5b78" />
            <path d="M58 4.500h7v8L61.500 16 58 12.500z" fill="#eef3fa" />
            <path d="M61.500 7v5M68.500 7v6" stroke="#7b92b8" />
          </g>
        </svg>
      </div>
    </div>
  );
}

/* ---------- taskbar ---------- */

function Task({ children, line = "" }: { children: React.ReactNode; line?: string }) {
  return (
    <div className="relative mr-px flex h-[40px] w-[48px] shrink-0 items-center justify-center">
      {children}
      {line && <span className={`absolute bottom-0 h-[2px] ${line}`} />}
    </div>
  );
}

const GREY_LINE = "w-[40px] bg-[#b5b5b5]";

function Flag({ size }: { size: number }) {
  return (
    <svg width={size} height={size} viewBox="0 0 16 16" fill="#fff">
      <path d="M0 2.200L6.600 1.300v6.200H0zM7.300 1.200L16 0v7.500H7.300zM0 8.300h6.600v6.300L0 13.700zM7.300 8.300H16V16l-8.700-1.300z" />
    </svg>
  );
}

function Taskbar() {
  return (
    <footer className="relative flex h-[40px] shrink-0 bg-[#090a0a] text-white">
      <div className="absolute left-[682px] top-0 flex h-[40px] items-center font-['Liberation_Serif',serif] leading-none text-[#242424]">
        <span className="text-[36px]">P</span>
        <span className="mt-[6px] text-[25px] tracking-[2px]">ART</span>
        <span className="ml-[10px] text-[38px]">2</span>
      </div>
      <div className="flex w-[48px] items-center justify-center bg-[#100e0b]"><Flag size={16} /></div>
      <div className="w-[344px] bg-[#333] pl-[12px] text-[15px] leading-[40px] tracking-[-0.42px] text-[#9c9c9c]">Search the web and Windows</div>
      <div className="relative flex">
        <Task>
          <svg width="20" height="14" viewBox="0 0 20 14" fill="none" stroke="#eee"><path d="M4.500.500h11v13h-11zM2.500 2.500h-2v9h2M17.500 2.500h2v9h-2" /></svg>
        </Task>
        <Task>
          <svg width="22" height="24" viewBox="0 0 22 24">
            <path d="M6 7V4.500Q6 1.500 9 1.500t3 3V7M9 3q6-3 7 4" fill="none" stroke="#fff" strokeWidth="1.400" />
            <path d="M1 8l20-1v15.500L1 21z" fill="#fff" />
            <path d="M4 12l4.500-.5v3.500H4zM9.500 11.300l6-.6V15h-6zM4 16h4.500v3.500L4 19zM9.500 16h6v4.300l-6-.7z" fill="#0a0a0a" />
          </svg>
        </Task>
        <Task line={GREY_LINE}>
          <svg width="22" height="20" viewBox="0 0 22 20">
            <path d="M0 1h8l2 2h11v16H0z" fill="#e8b53c" />
            <path d="M0 5h21.500v13.500H0z" fill="#fce088" />
            <path d="M4 19v-8h14v8h-4v-4H8v4z" fill="#33b1e8" />
          </svg>
        </Task>
        <Task>
          <svg width="22" height="20" viewBox="0 0 22 20">
            <path d="M0 2l4 1 1-2 5 1 1 2 5-1 1-2 5 1v17L0 16z" fill="#a2a5a9" />
            <path d="M0 6.500h22M0 10.500h22M0 14.500h22M5 3v3.500M12 3v3.500M17 3v3.500M3 7v4M9 7v4M15 7v4M6 11v3M12 11v3M19 11v3M4 15v2M10 15v3M16 15v3" stroke="#54575b" />
            <path d="M1 5h3M6 5h5M13 5h3M4 9h4M10 9h4M7 13h4" stroke="#eef0f2" />
          </svg>
        </Task>
        <div className="relative mr-px flex h-[40px] w-[48px] items-center justify-center border-b-2 border-[#ee7310] bg-[#9b551d]">
          <svg width="22" height="17" viewBox="0 0 22 17">
            <rect x=".5" y=".5" width="21" height="16" rx="1" fill="#7fc6ef" stroke="#bce3f8" />
            <circle cx="7" cy="7.500" r="4" fill="#2c79be" /><path d="M7 7.500V3a4.500 4.500 0 0 1 4.500 4.500z" fill="#f5b942" />
            <path d="M13 5h5M13 8h5M13 11h5M3 14h15M12 6v5" stroke="#1f65a3" />
          </svg>
        </div>
        <Task line={GREY_LINE}>
          <svg width="24" height="24" viewBox="0 0 24 24">
            <circle cx="12" cy="12.500" r="10.500" fill="#ff6a1f" />
            <path d="M13 1c6 2 11 7 9.500 14-1.500 5-5 8-9 8 4-3 7-8 3-13-2-3-3.500-5-3.500-9z" fill="#ffd23b" />
            <path d="M2 9c-1 8 4 13 10 14-6-1-8-5-7-9z" fill="#f02e5b" />
            <circle cx="12" cy="11.500" r="5.500" fill="#31429a" />
            <path d="M3 6c3-2 6 0 7 2l3 1c0 2-3 2-3 4 1 3 5 3 7 1-1 5-8 6-11 2-2-3-3-6-3-10z" fill="#ff8b20" />
          </svg>
        </Task>
        <Task>
          <svg width="22" height="24" viewBox="0 0 22 24">
            <path d="M1 11C2 4 7 1 11.500 1 17 1 21 5 21 10.500V14H8c0 5 7 6 12 3v4.500C12 26 2.500 22.500 4 14c.5-3 2.500-5 5-6-1 1-1.500 2-1.700 3h7.500C15 4.500 7 4.500 1 11z" fill="#1583d8" />
          </svg>
        </Task>
        <Task line={GREY_LINE}>
          <svg width="24" height="24" viewBox="0 0 24 24">
            <path d="M4 2l17 1 2 12-14 2z" fill="#dfe3ee" /><path d="M6 4l14 .5 1.500 9L10 15z" fill="#3348c6" />
            <path d="M12 17h5l1 3 3 1-1 2h-9l1-3z" fill="#d7d9de" />
            <path d="M1 7h16v6H1z" fill="#bfe2fb" stroke="#3a83c4" /><path d="M3 9h12M3 11h12" stroke="#3a83c4" strokeDasharray="1 1" />
          </svg>
        </Task>
        <Task>
          <svg width="23" height="20" viewBox="0 0 23 20">
            <rect x=".5" y=".5" width="21" height="18" fill="#050505" stroke="#8b8b8b" /><path d="M1 1h20v2H1z" fill="#bbb" />
            <text x="2" y="9" fontSize="5" fontFamily="Liberation Mono" fontWeight="bold" fill="#eee">C:\_</text>
            <path d="M13 8.500h5" stroke="#ddd" />
          </svg>
        </Task>
        <Task line={GREY_LINE}>
          <svg width="24" height="24" viewBox="0 0 24 24">
            <path d="M6 1h14l2 17-17 3L1 20V6q0-4 5-5z" fill="#3d6cc0" /><path d="M4 3l14-1 1 5-14 5z" fill="#8bb2ec" />
            <path d="M8 6l14 1v16L8 21z" fill="#f5f8fe" />
            <path d="M9 10l1.500 7L12 11.500l1.500 5.500L15 10" fill="none" stroke="#274c9b" strokeWidth="1.800" />
            <path d="M16 11.500h5M16 14.500h5M10 19.500h11" stroke="#4268b0" />
          </svg>
        </Task>
        <Task line={GREY_LINE}>
          <svg width="25" height="25" viewBox="0 0 25 25">
            <path d="M2 15C0 9 6 5 13 5c6 0 10 4 9 10-1 5-6 8-11 7-3 0-2-4-4-5-2 0-4 0-5-2z" fill="#cfe6f7" stroke="#8fb8d6" strokeWidth=".6" />
            <circle cx="6" cy="13" r="2" fill="#d8443b" /><circle cx="9" cy="9" r="2" fill="#e7a92f" /><circle cx="14" cy="8.500" r="2" fill="#47a84a" /><circle cx="17" cy="16" r="2" fill="#3f74c8" />
            <path d="M13 23L19 6" stroke="#e6922f" strokeWidth="2.400" /><path d="M18 6l-1-4 3-1 4 2-3 4z" fill="#c58a56" />
          </svg>
        </Task>
        <div className="relative flex h-[40px] w-[49px] items-center justify-center border-b-2 border-[#c5c5c5] bg-[#40423f]">
          <svg width="24" height="24" viewBox="0 0 24 24">
            <path d="M6 2h14l2 17-17 2L1 20V7q0-4 5-5z" fill="#60ae43" /><path d="M4 4l14-1 1 5-14 5z" fill="#b5e099" />
            <path d="M8 6l14 1v16L8 21z" fill="#f3faee" />
            <path d="M7 8l7 9M14 7L7 18" stroke="#1f5b20" strokeWidth="2.200" />
            <path d="M16 10h5v3h-5zM16 14.500h5v2.500h-5zM9 18.500h5V21H9zM16 18.500h5V21h-5z" fill="#5fae45" />
          </svg>
        </div>
      </div>
      <svg width="92" height="40" viewBox="0 0 92 40" className="ml-auto mr-[12px]" fill="none" stroke="#fff">
        <path d="M7 22.500l5.500-5 5.500 5" strokeWidth="1.400" />
        <path d="M32 26c0-6 5-11 11-11M35 26.500c0-4 4-8 8-8M38 27c0-3 2-5 5-5" strokeWidth="1.300" />
        <path d="M41 24.500l2-2V27h-3z" fill="#fff" stroke="none" />
        <path d="M60.500 16.500h7v8h-8M68 18.500h1v4h-1M59 17.500l5 6M64 17.500l-5 6M52.500 14v3M55.500 14v3M51 17.500h6v2l-2 2h-2l-2-2zM54 21v4" stroke="#ccc" />
        <path d="M76 12h16v12h-5l-4 3v-3h-7z" fill="#fff" stroke="none" />
        <path d="M79 15.500h10M79 18.500h10M79 21.500h4" stroke="#111" />
        <circle cx="87.500" cy="22.500" r="4.500" fill="#111" stroke="#fff" /><path d="M85 22.500h5" />
      </svg>
      <div className="mr-[8px] w-[66px] pt-[2px] text-center text-[12px] leading-[17px]">
        <div className="tracking-[-0.45px]">03:28 PM</div>
        <div className="whitespace-nowrap tracking-[-0.6px]">07/08/2019</div>
      </div>
      <div className="w-[4px] border-l border-[#555]" />
    </footer>
  );
}

/* ---------- on-screen keyboard ---------- */

type KeyDef = { m?: string; s?: string; w?: string; cls?: string; node?: React.ReactNode };

function Key({ k, tall }: { k: KeyDef; tall?: boolean }) {
  return (
    <div className={`relative flex shrink-0 overflow-hidden ${k.w ?? "w-[21px]"} ${tall ? "h-[22px]" : "h-[21px]"} ${k.cls ?? "bg-[#333]"}`}>
      {k.node ? (
        <span className="flex w-full items-center justify-center">{k.node}</span>
      ) : k.s ? (
        <>
          <span className="w-[8px] pl-[2px] leading-[17px] text-[#858585]">{k.s}</span>
          <span className="ml-auto pr-[4px] leading-[26px] text-white">{k.m}</span>
        </>
      ) : (
        <span className="whitespace-nowrap pl-[5px] leading-[17px]">{k.m}</span>
      )}
    </div>
  );
}

const letters = (s: string): KeyDef[] => s.split("").map((m) => ({ m }));
const chev = (d: string) => (
  <svg width="14" height="14" viewBox="0 0 14 14" fill="none" stroke="#fff" className="-ml-[1px] -mt-[4px]"><path d={d} /></svg>
);

const KEYS: KeyDef[][] = [
  [
    { node: <span className="-ml-[2px] -mt-[10px] text-[6px] font-bold">Esc</span> },
    { s: "¬", m: "`" }, { s: "!", m: "1" }, { s: '"', m: "2" }, { s: "£", m: "3" }, { s: "$", m: "4" }, { s: "%", m: "5" }, { s: "^", m: "6" },
    { s: "&", m: "7" }, { s: "*", m: "8" }, { s: "(", m: "9" }, { s: ")", m: "0" }, { s: "_", m: "-" }, { s: "+", m: "=" },
    {
      w: "w-[40px]",
      node: (
        <svg width="13" height="9" viewBox="0 0 13 9" className="-ml-[14px] -mt-[6px]" fill="none" stroke="#fff">
          <path d="M4 .5h8.500v8H4L.5 4.500zM6 2.500l4 4M10 2.500l-4 4" />
        </svg>
      ),
    },
  ],
  [{ m: "Tab", w: "w-[32px]" }, ...letters("QWERTYUIOP"), { s: "{", m: "[" }, { s: "}", m: "]" }, { m: "", w: "w-[51px]" }],
  [{ m: "Caps", w: "w-[41px]", cls: "bg-[#0078d7]" }, ...letters("ASDFGHJKL"), { s: ":", m: ";" }, { s: "@", m: "'" }, { s: "~", m: "#" }, { m: "", w: "w-[42px]" }],
  [
    { m: "Shift", w: "w-[32px]" }, { s: "|", m: "\\" }, ...letters("ZXCVBNM"), { s: "<", m: "," }, { s: ">", m: "." }, { s: "?", m: "/" },
    { node: chev("M1 9l6-5 6 5") }, { m: "Shift" }, { m: "Del", w: "w-[29px]" },
  ],
  [
    { m: "Fn" }, { m: "Ctrl" }, { cls: "bg-[#0078d7]", node: <Flag size={14} /> }, { m: "Alt" }, { m: "", w: "w-[122px]" }, { m: "AltGr" }, { m: "Ctrl" },
    { node: chev("M8 2L3 8l5 6") }, { node: chev("M1 5l6 5 6-5") }, { node: chev("M4 2l6 6-6 6") },
    {
      w: "w-[27px]",
      node: (
        <svg width="11" height="13" viewBox="0 0 11 13" fill="none" stroke="#fff" className="-mt-[2px]"><path d="M.5.500h10v12H.5zM.5 3.500h10M3 6.500h5M3 9.500h5" /><path d="M1 2h9" strokeWidth="2" /></svg>
      ),
    },
  ],
];

function Keyboard() {
  return (
    <aside className="absolute left-[956px] top-[413px] flex h-[164px] w-[410px] flex-col overflow-hidden bg-[#1a1a1a] text-[12px] text-white shadow-[0_1px_5px_rgba(0,0,0,0.45)]">
      <div className="flex h-[30px] shrink-0 items-center gap-[6px] bg-white pl-[8px] text-[12px] tracking-[-0.35px] text-[#999]">
        <svg width="15" height="8" viewBox="0 0 15 8"><path d="M0 0h15v8H0z" fill="#2a7ccc" /><path d="M1 2h13M1 4h13" stroke="#d7eafc" strokeDasharray="1 1" /><path d="M3 6.500h9" stroke="#d7eafc" /></svg>
        On-Screen Keyboard
      </div>
      <div className="flex pl-px pt-[23px]">
        <div className="relative flex w-[348px] flex-col gap-px tracking-[-0.2px]">
          {KEYS.map((row, i) => (
            <div key={i} className="flex gap-px">
              {row.map((k, j) => (
                <Key key={j} k={k} tall={i === 0} />
              ))}
            </div>
          ))}
          <div className="absolute left-[306px] top-[24px] h-[22px] w-[42px] bg-[#333] pl-[6px] leading-[20px] tracking-[-0.35px]">Enter</div>
        </div>
        <div className="ml-[6px] flex flex-1 flex-col gap-px">
          {["Home", "End", "Insert", "PrtScn", "Options"].map((t, i) => (
            <div key={t} className={`whitespace-nowrap pl-[5px] tracking-[-0.2px] ${i === 0 ? "h-[22px] leading-[18px]" : i === 4 ? "h-[21px] leading-[19px]" : "h-[21px] leading-[17px]"} ${t === "PrtScn" ? "bg-[#0078d7]" : "bg-[#333]"}`}>{t}</div>
          ))}
        </div>
      </div>
    </aside>
  );
}

export default function App() {
  return (
    <div className={`relative flex h-[768px] w-[1366px] flex-col overflow-hidden bg-white ${UI}`}>
      <TitleBar />
      <TabStrip />
      <Ribbon />
      <FormulaBar />
      <div className="-mt-px flex flex-col">
        <Workspace />
      </div>
      <SheetTabs />
      <StatusBar />
      <Taskbar />
      <div className="absolute left-[767px] top-[163px] h-[6px] w-[6px] bg-white" />
      <OfficeButton />
      <Keyboard />
      <div className="pointer-events-none absolute left-[1073px] top-[651px] whitespace-nowrap text-[#8fa6c9]">
        <div className="text-[19px] leading-[22px] tracking-[0.02px]">Activate Windows</div>
        <div className="h-[17px] overflow-hidden text-[14px] leading-[22px] tracking-[0.16px]">Go to Settings to activate Windows.</div>
      </div>
    </div>
  );
}
